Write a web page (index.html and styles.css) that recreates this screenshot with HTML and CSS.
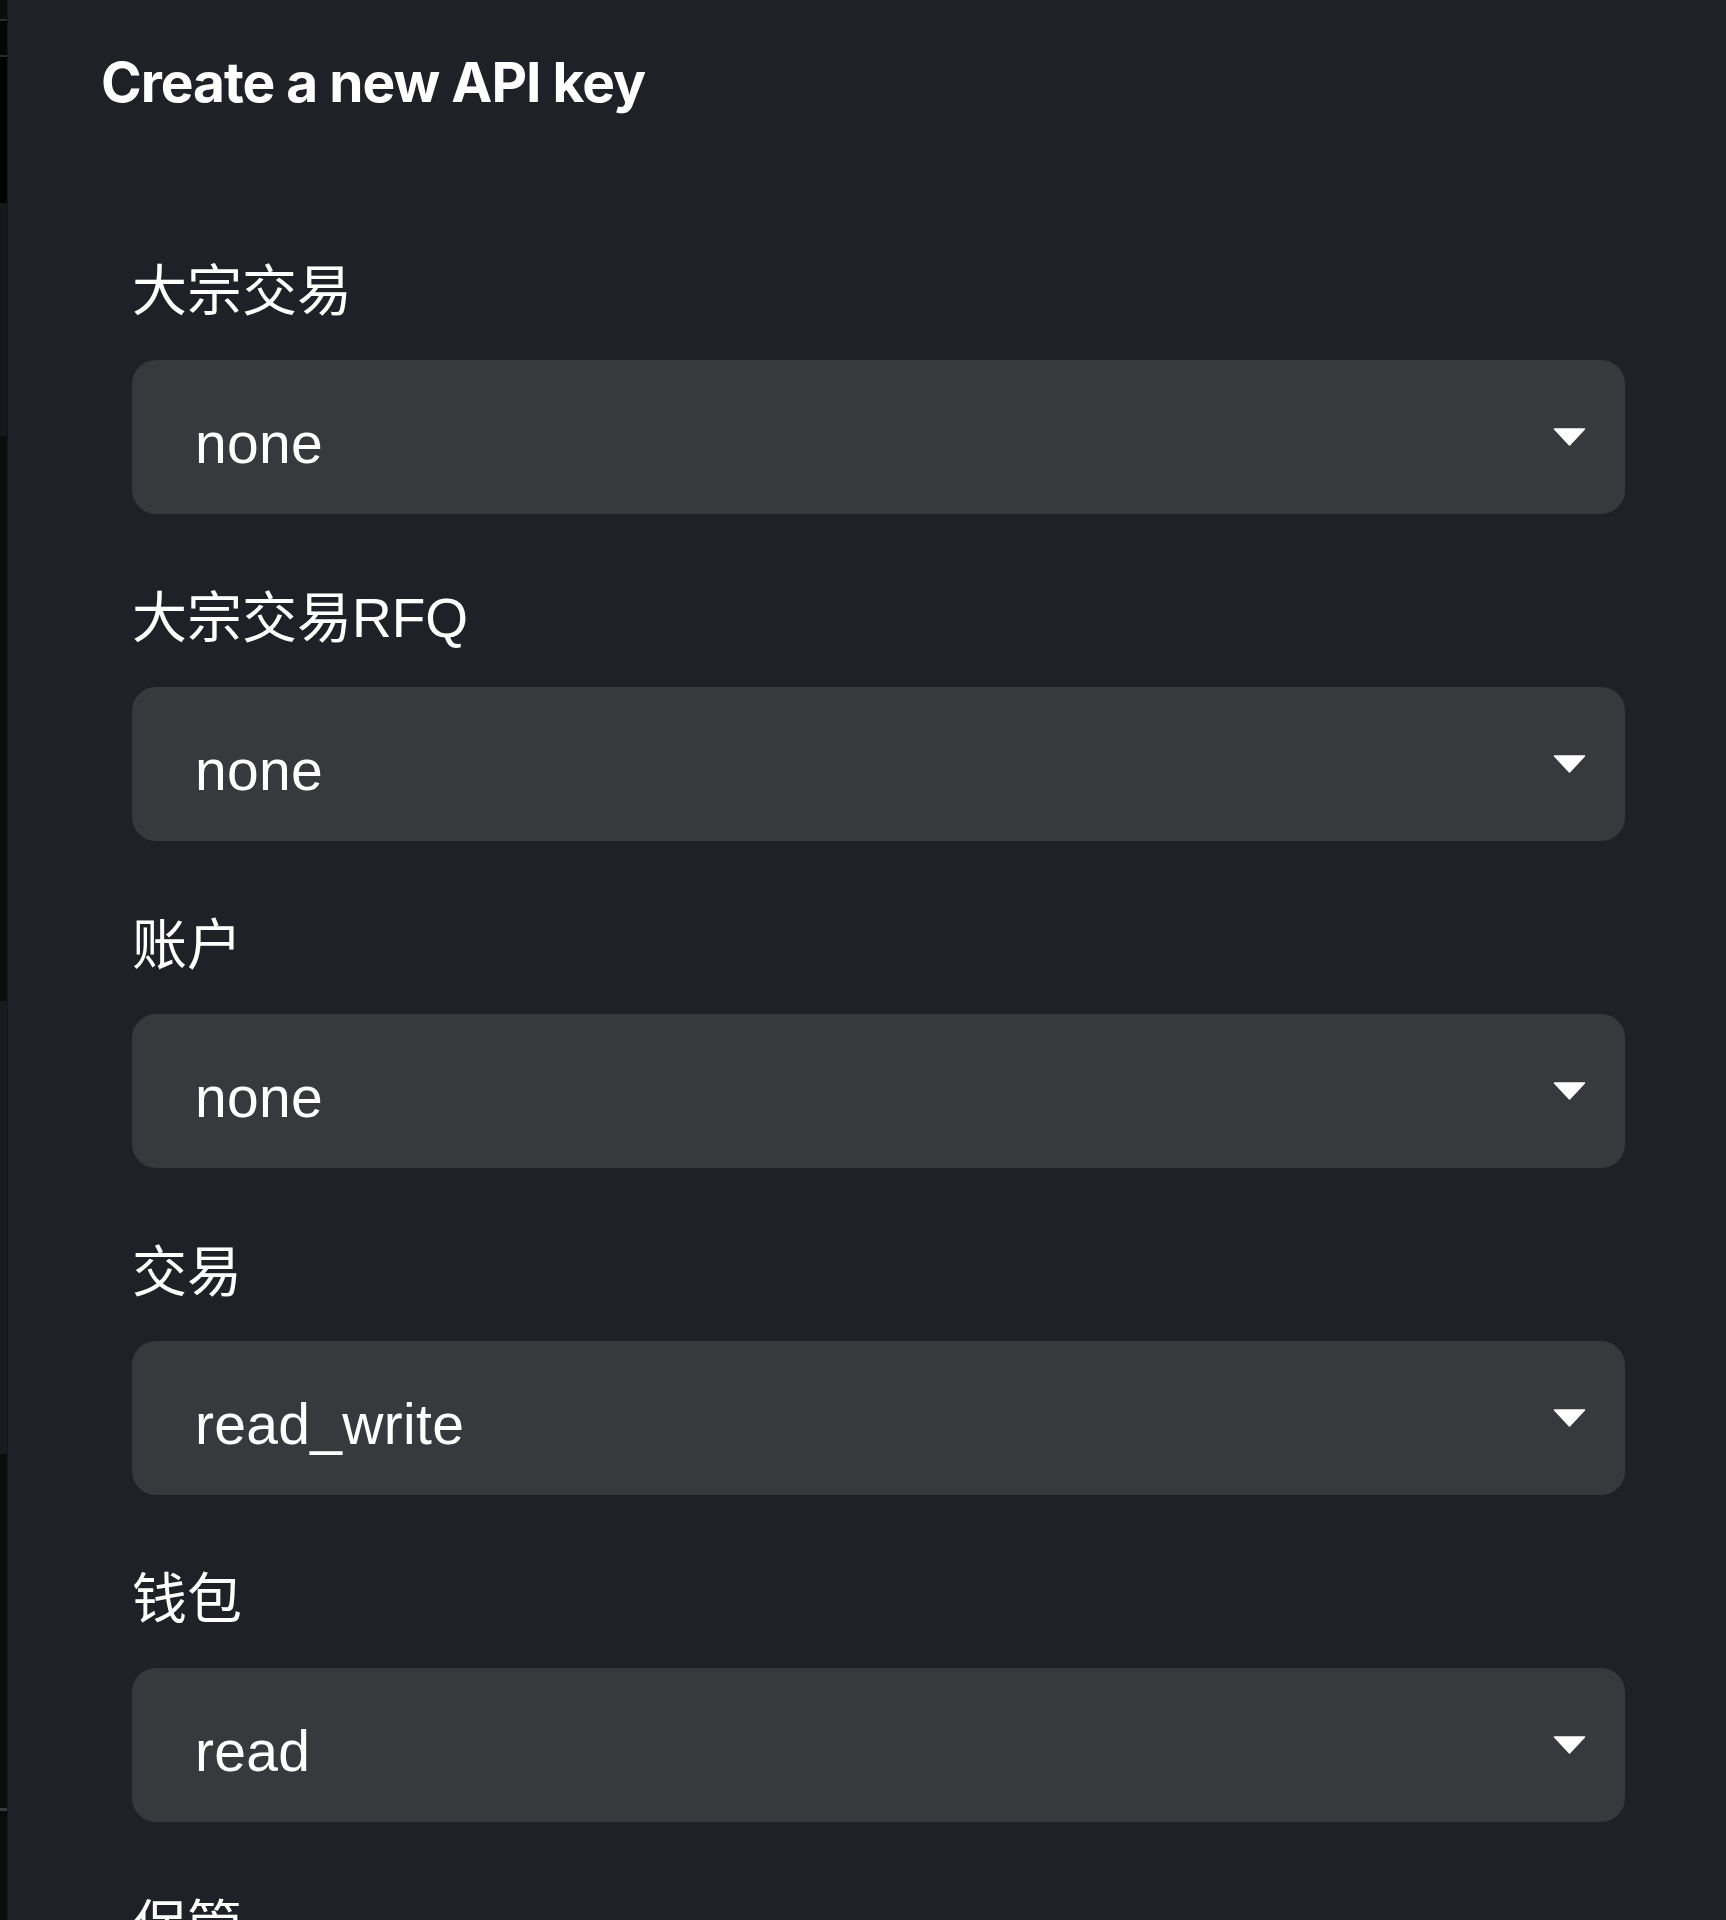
FILE: index.html
```html
<!DOCTYPE html>
<html lang="zh-CN">
<head>
<meta charset="utf-8">
<title>Create a new API key</title>
<link rel="stylesheet" href="styles.css">
</head>
<body>
<div class="page">
  <div class="backdrop-strip">
    <div class="seg seg-a"></div>
    <div class="seg seg-line"></div>
    <div class="seg seg-b"></div>
    <div class="seg seg-line"></div>
    <div class="seg seg-c"></div>
    <div class="seg seg-d"></div>
    <div class="seg seg-e"></div>
    <div class="seg seg-f"></div>
    <div class="seg seg-g"></div>
    <div class="seg seg-line2"></div>
    <div class="seg seg-h"></div>
  </div>
  <main class="modal">
    <h1 class="title">Create a new API key</h1>
    <form class="form">
      <div class="field">
        <label class="label">大宗交易</label>
        <div class="select"><span class="value">none</span><svg class="caret" viewBox="0 0 33 18" width="33" height="18"><polygon points="1.5,1 31.5,1 16.5,17" fill="#fff" stroke="#fff" stroke-width="1.5" stroke-linejoin="round"/></svg></div>
      </div>
      <div class="field">
        <label class="label">大宗交易RFQ</label>
        <div class="select"><span class="value">none</span><svg class="caret" viewBox="0 0 33 18" width="33" height="18"><polygon points="1.5,1 31.5,1 16.5,17" fill="#fff" stroke="#fff" stroke-width="1.5" stroke-linejoin="round"/></svg></div>
      </div>
      <div class="field">
        <label class="label">账户</label>
        <div class="select"><span class="value">none</span><svg class="caret" viewBox="0 0 33 18" width="33" height="18"><polygon points="1.5,1 31.5,1 16.5,17" fill="#fff" stroke="#fff" stroke-width="1.5" stroke-linejoin="round"/></svg></div>
      </div>
      <div class="field">
        <label class="label">交易</label>
        <div class="select"><span class="value">read_write</span><svg class="caret" viewBox="0 0 33 18" width="33" height="18"><polygon points="1.5,1 31.5,1 16.5,17" fill="#fff" stroke="#fff" stroke-width="1.5" stroke-linejoin="round"/></svg></div>
      </div>
      <div class="field">
        <label class="label">钱包</label>
        <div class="select"><span class="value">read</span><svg class="caret" viewBox="0 0 33 18" width="33" height="18"><polygon points="1.5,1 31.5,1 16.5,17" fill="#fff" stroke="#fff" stroke-width="1.5" stroke-linejoin="round"/></svg></div>
      </div>
      <div class="field">
        <label class="label">保管</label>
        <div class="select"><span class="value">none</span><svg class="caret" viewBox="0 0 33 18" width="33" height="18"><polygon points="1.5,1 31.5,1 16.5,17" fill="#fff" stroke="#fff" stroke-width="1.5" stroke-linejoin="round"/></svg></div>
      </div>
    </form>
  </main>
</div>
</body>
</html>
```
FILE: styles.css
```css
html, body {
  margin: 0;
  padding: 0;
  background: #202126;
  height: 1920px;
  overflow: hidden;
}

.page {
  display: flex;
  flex-direction: row;
  height: 1920px;
  overflow: hidden;
}

.backdrop-strip {
  width: 7px;
  flex: 0 0 7px;
  display: flex;
  flex-direction: column;
  border-right: 1px solid #15161a;
}

.seg { flex: 0 0 auto; }
.seg-a { height: 19px; background: #0c0d0f; }
.seg-line { height: 2px; background: #2b2c30; }
.seg-b { height: 34px; background: #050506; }
.seg-c { height: 146px; background: #020203; }
.seg-d { height: 233px; background: #17181b; }
.seg-e { height: 565px; background: #0b0c0e; }
.seg-f { height: 453px; background: #1a1b1f; }
.seg-g { height: 354px; background: #0b0c0e; }
.seg-line2 { height: 3px; background: #3a3b40; }
.seg-h { flex: 1 1 auto; background: #0b0c0e; }

.modal {
  flex: 1 1 auto;
  padding: 49px 101px 0 93px;
  box-sizing: border-box;
  color: #ffffff;
}

.title {
  margin: 0;
  font-family: Inter, "Liberation Sans", sans-serif;
  font-weight: 700;
  font-size: 55px;
  line-height: 66px;
  letter-spacing: -1px;
  color: #ffffff;
}

.form {
  margin: 143px 0 0 31px;
  display: flex;
  flex-direction: column;
  gap: 71px;
}

.field {
  display: flex;
  flex-direction: column;
  gap: 35px;
}

.label {
  font-family: "Liberation Sans", "Noto Sans CJK SC", sans-serif;
  font-size: 55px;
  line-height: 67px;
  color: #ffffff;
}

.select {
  height: 154px;
  box-sizing: border-box;
  background: #38393c;
  border-radius: 24px;
  display: flex;
  align-items: center;
  justify-content: space-between;
  padding: 0 39px 0 63px;
}

.value {
  font-family: "Liberation Sans", Arial, sans-serif;
  font-size: 57px;
  letter-spacing: 0.3px;
  padding-top: 12px;
  color: #ffffff;
}

.caret {
  display: block;
  flex: 0 0 auto;
}
```
